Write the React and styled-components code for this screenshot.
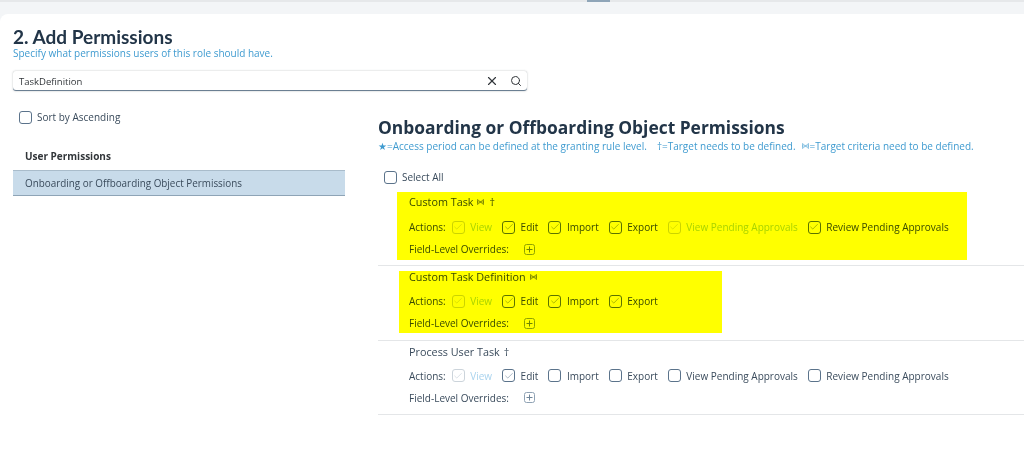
import React from "react";
import styled, { createGlobalStyle } from "styled-components";
import { X, Search, Check } from "lucide-react";

const GlobalStyle = createGlobalStyle`
  html, body {
    margin: 0;
    padding: 0;
    background: #fff;
  }
  body {
    font-family: "Open Sans", "Liberation Sans", sans-serif;
    color: #3a4b5c;
    overflow: hidden;
  }
`;

const rows = [
  {
    title: "Custom Task",
    marks: ["criteria", "target"],
    actions: [
      { label: "View", checked: true, disabled: true },
      { label: "Edit", checked: true },
      { label: "Import", checked: true },
      { label: "Export", checked: true },
      { label: "View Pending Approvals", checked: true, disabled: true },
      { label: "Review Pending Approvals", checked: true },
    ],
  },
  {
    title: "Custom Task Definition",
    marks: ["criteria"],
    actions: [
      { label: "View", checked: true, disabled: true },
      { label: "Edit", checked: true },
      { label: "Import", checked: true },
      { label: "Export", checked: true },
    ],
  },
  {
    title: "Process User Task",
    marks: ["target"],
    actions: [
      { label: "View", checked: true, disabled: true },
      { label: "Edit", checked: true },
      { label: "Import" },
      { label: "Export" },
      { label: "View Pending Approvals" },
      { label: "Review Pending Approvals" },
    ],
  },
];

const CriteriaMark = () => (
  <MarkIcon width="7" height="6" viewBox="0 0 7 6">
    <path d="M0.5 0.5L6.5 5.5M6.5 0.5L0.5 5.5M0.5 0.5V5.5M6.5 0.5V5.5M0 3H7" stroke="currentColor" strokeWidth="0.7" fill="none" />
  </MarkIcon>
);

const CheckItem = ({ label, checked, disabled }) => (
  <Item>
    <Box $disabled={disabled}>
      {checked && <Check size={10} strokeWidth={1.2} />}
    </Box>
    <ItemLabel $disabled={disabled}>{label}</ItemLabel>
  </Item>
);

const App = () => {
  return (
    <Page>
      <GlobalStyle />
      <TopBar>
        <TopTab />
      </TopBar>
      <Card>
        <Title>2. Add Permissions</Title>
        <Subtitle>Specify what permissions users of this role should have.</Subtitle>
        <SearchBar>
          <SearchText>TaskDefinition</SearchText>
          <X size={14} strokeWidth={2} color="#32363a" />
          <Search size={12} strokeWidth={2} color="#32363a" />
        </SearchBar>
        <Columns>
          <LeftCol>
            <SortRow>
              <Box />
              <span>Sort by Ascending</span>
            </SortRow>
            <ListHeading>User Permissions</ListHeading>
            <ListItem>Onboarding or Offboarding Object Permissions</ListItem>
          </LeftCol>
          <RightCol>
            <SectionTitle>Onboarding or Offboarding Object Permissions</SectionTitle>
            <Legend>
              <span>★=Access period can be defined at the granting rule level.</span>
              <span>†=Target needs to be defined.</span>
              <LegendLast>
                <CriteriaMark />
                =Target criteria need to be defined.
              </LegendLast>
            </Legend>
            <SelectAll>
              <Box />
              <span>Select All</span>
            </SelectAll>
            {rows.map((row, i) => (
              <Row key={i} $first={i === 0}>
                <RowTitle>
                  <span>{row.title}</span>
                  {row.marks.map((m) =>
                    m === "criteria" ? <CriteriaMark key={m} /> : <span key={m}>†</span>
                  )}
                </RowTitle>
                <ActionsLine $first={i === 0}>
                  <ActionsLabel>Actions:</ActionsLabel>
                  {row.actions.map((a) => (
                    <CheckItem key={a.label} {...a} />
                  ))}
                </ActionsLine>
                <OverridesLine>
                  <span>Field-Level Overrides:</span>
                  <svg width="11" height="11" viewBox="0 0 11 11">
                    <rect x="0.5" y="0.5" width="10" height="10" rx="2" fill="none" stroke="#8fa2b4" />
                    <path d="M5.5 2.5v6M2.5 5.5h6" stroke="#6f8599" strokeWidth="1" />
                  </svg>
                </OverridesLine>
              </Row>
            ))}
          </RightCol>
        </Columns>
        <Highlight $top={192} $left={397} $width={570} $height={68} />
        <Highlight $top={271} $left={399} $width={323} $height={62} />
      </Card>
    </Page>
  );
};

const Page = styled.div`
  width: 1024px;
  height: 459px;
  background: #f3f5f7;
  overflow: hidden;
`;

const TopBar = styled.div`
  height: 2px;
  background: #e6e8ea;
  display: flex;
  justify-content: center;
  margin-bottom: 12px;
`;

const TopTab = styled.div`
  width: 23px;
  height: 2px;
  margin-left: 173px;
  background: #8fa5b8;
`;

const Card = styled.div`
  position: relative;
  height: 445px;
  box-sizing: border-box;
  padding: 13px 0 0 13px;
  background: #fff;
  border-radius: 8px 0 0 0;
`;

const Title = styled.h1`
  margin: 0;
  font-family: "Lato", "Open Sans", sans-serif;
  font-size: 19px;
  line-height: 19px;
  font-weight: 700;
  color: #223548;
`;

const Subtitle = styled.div`
  font-size: 10px;
  line-height: 14px;
  color: #3f9bd0;
`;

const SearchBar = styled.div`
  width: 514px;
  height: 20px;
  margin-top: 11px;
  box-sizing: border-box;
  padding: 0 5px 0 6px;
  display: flex;
  align-items: center;
  gap: 11px;
  border-radius: 3px;
  background: #fff;
  box-shadow: 0 0 2px rgba(50, 54, 58, 0.35), inset 0 -1px 0 #6b7f92;
  font-size: 9.5px;
  color: #32363a;
`;

const SearchText = styled.span`
  flex: 1;
`;

const Columns = styled.div`
  display: flex;
  margin-top: 19px;
`;

const LeftCol = styled.div`
  width: 332px;
  margin-right: 33px;
  flex: none;
`;

const SortRow = styled.label`
  display: flex;
  align-items: center;
  gap: 5px;
  padding-left: 6px;
  font-size: 10px;
  line-height: 14px;
`;

const ListHeading = styled.div`
  margin-top: 25px;
  padding-left: 12px;
  font-size: 10px;
  line-height: 14px;
  font-weight: 700;
  color: #32363a;
`;

const ListItem = styled.div`
  margin-top: 7px;
  height: 26px;
  box-sizing: border-box;
  padding: 0 0 1px 12px;
  display: flex;
  align-items: center;
  background: #c8dbea;
  border-top: 1px solid #a9bccb;
  border-bottom: 1px solid #8ea4b6;
  font-size: 9.9px;
`;

const RightCol = styled.div`
  flex: 1;
  padding-top: 6px;
`;

const SectionTitle = styled.h2`
  margin: 0;
  font-size: 17.4px;
  line-height: 22px;
  font-weight: 700;
  color: #223548;
`;

const Legend = styled.div`
  display: flex;
  gap: 10px;
  margin-top: 1px;
  font-size: 10px;
  line-height: 14px;
  color: #3f9bd0;
`;

const LegendLast = styled.span`
  display: flex;
  align-items: center;
  margin-left: -4px;
`;

const MarkIcon = styled.svg`
  flex: none;
  margin-right: 1px;
  opacity: 0.8;
`;

const SelectAll = styled.label`
  display: flex;
  align-items: center;
  gap: 5px;
  margin-top: 17px;
  padding-left: 6px;
  font-size: 10px;
  line-height: 14px;
`;

const Row = styled.div`
  height: ${(p) => (p.$first ? "77px" : "74.5px")};
  box-sizing: border-box;
  padding: ${(p) => (p.$first ? "6px" : "4px")} 0 0 31px;
  margin-top: ${(p) => (p.$first ? "5px" : "0")};
  border-bottom: 1px solid #e4e6e8;
  font-size: 10px;
`;

const RowTitle = styled.div`
  display: flex;
  align-items: center;
  gap: 4px;
  line-height: 14px;
  font-size: 10.8px;
`;

const ActionsLine = styled.div`
  display: flex;
  align-items: center;
  gap: 10px;
  margin-top: ${(p) => (p.$first ? "11px" : "10px")};
  height: 14px;
`;

const ActionsLabel = styled.span`
  margin-right: -4px;
`;

const OverridesLine = styled.div`
  display: flex;
  align-items: center;
  gap: 15px;
  margin-top: 8px;
  height: 14px;
`;

const Item = styled.div`
  display: flex;
  align-items: center;
  gap: 5.5px;
`;

const Box = styled.span`
  width: 11px;
  height: 11px;
  flex: none;
  display: flex;
  align-items: center;
  justify-content: center;
  border: 1px solid ${(p) => (p.$disabled ? "#ccd4db" : "#5b738b")};
  border-radius: 3px;
  background: #fff;
  color: ${(p) => (p.$disabled ? "#b8c4ce" : "#5b738b")};
`;

const ItemLabel = styled.span`
  color: ${(p) => (p.$disabled ? "#a9d3ee" : "inherit")};
`;

const Highlight = styled.div`
  position: absolute;
  top: ${(p) => p.$top - 14}px;
  left: ${(p) => p.$left}px;
  width: ${(p) => p.$width}px;
  height: ${(p) => p.$height}px;
  background: #ffff00;
  mix-blend-mode: multiply;
  pointer-events: none;
`;

export default App;
